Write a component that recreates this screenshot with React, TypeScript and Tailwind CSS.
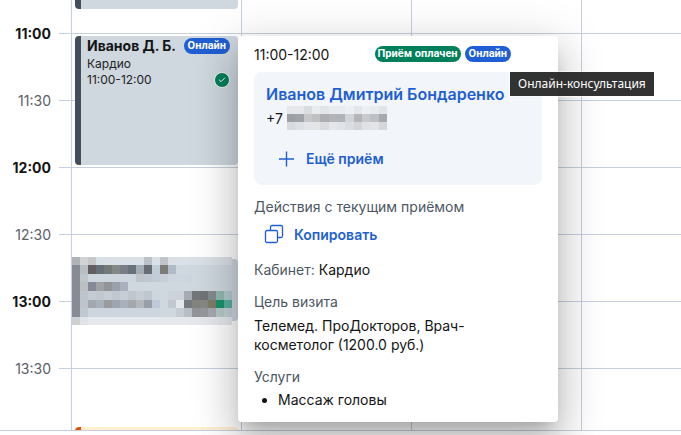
import { Check } from 'lucide-react';

type Slot = { time: string; full: boolean };

const SLOTS: Slot[] = [
  { time: '11:00', full: true },
  { time: '11:30', full: false },
  { time: '12:00', full: true },
  { time: '12:30', full: false },
  { time: '13:00', full: true },
  { time: '13:30', full: false },
];

const COLUMNS = [0, 1, 2, 3];

// each row: y, height, colours of the 8px cells from left to right
const CARD_MOSAIC: [number, number, string[]][] = [
  [0, 8, ['#b0b3b6', '#d1d3d5', '#c5c7ca', '#d8e0e7', '#dbe0e6', '#dbe0e6', '#dbe0e6', '#dbe0e6', '#dbe0e6', '#bcc1c7', '#dbe0e6', '#c1c5c9', '#dbe0e6', '#dbe0e6', '#dbe0e6', '#dbe0e6', '#dbe0e6', '#dbe0e6', '#dbe0e6', '#dbe0e6']],
  [8, 9, ['#868b94', '#b9bec2', '#625e60', '#686e76', '#737879', '#838786', '#787d87', '#69717a', '#a3abb5', '#686c74', '#c0ccd8', '#7d7b78', '#b0bbc7', '#cfd7df', '#cfd7df', '#cfd7df', '#cfd7df', '#cfd7df', '#cfd7df', '#cfd7df']],
  [17, 8, ['#868b94', '#bec5cb', '#cdd6de', '#cdd6de', '#cdd6de', '#cdd6de', '#cdd6de', '#cdd6de', '#bfc5c9', '#c0c7ce', '#c0cbd8', '#c7ced5', '#cdd6de', '#cdd6de', '#cdd6de', '#cfd7df', '#cfd7df', '#cfd7df', '#cfd7df', '#cfd7df']],
  [25, 9, ['#868b94', '#bcc0c3', '#868995', '#9fa3a4', '#929497', '#9ba1ab', '#abb0be', '#cfd7df', '#cfd7df', '#cfd7df', '#cfd7df', '#cfd7df', '#cfd7df', '#cfd7df', '#cfd7df', '#cfd7df', '#cfd7df', '#cfd7df', '#cfd7df', '#cfd7df']],
  [34, 9, ['#868b94', '#bdc4cb', '#c4cbd2', '#c1c8cf', '#c6cdd4', '#c0c7cf', '#c6cdd4', '#bfc6ce', '#c6cdd4', '#bec6ce', '#cdd6de', '#cfd7df', '#cdd3da', '#cdd1d8', '#a5abb2', '#73777a', '#707477', '#858a8c', '#91b9af', '#b0cbcb']],
  [43, 8, ['#868b94', '#bdc4cb', '#a4a8ae', '#a9b1bb', '#9a9b9d', '#9ea5b2', '#abb1ba', '#a3a7ae', '#b4b8bc', '#989fa7', '#becada', '#cfd7df', '#c3c7ce', '#e4e7eb', '#757a7c', '#838382', '#888885', '#827c6a', '#1a926c', '#5ab09c']],
  [51, 9, ['#868b94', '#c0c8d0', '#cdd6de', '#cdd6de', '#cdd6de', '#cdd6de', '#cdd6de', '#cdd6de', '#cdd6de', '#cdd6de', '#cdd6de', '#cfd7df', '#cfd7df', '#c6ccd3', '#b8bec5', '#92949a', '#96989e', '#a5a8b1', '#b5cac8', '#c3d0d5']],
  [60, 8, ['#cecfd3', '#e0e3e8', '#e5e8ed', '#e5e8ed', '#e5e8ed', '#e5e8ed', '#e5e8ed', '#e5e8ed', '#e5e8ed', '#e5e8ed', '#e5e8ed', '#e5e8ed', '#e5e8ed', '#e5e8ed', '#e5e8ed', '#e5e8ed', '#e5e8ed', '#e5e8ed', '#e5e8ed', '#e5e8ed']],
];

const PHONE_MOSAIC: [number, number, string[]][] = [
  [0, 8, ['#e5e7ea', '#e5e7ea', '#dadde0', '#e9ebee', '#e2e5e8', '#e9ecef', '#e9ecef', '#eceff3', '#e3e6ea', '#eceff3', '#e9ecef', '#e2e5e8']],
  [8, 8, ['#9c9fa6', '#9fa2a7', '#c7c8ca', '#c0c1c2', '#adaeb1', '#b3b4b6', '#b2b4bb', '#d2d4d7', '#b3b5b8', '#c8cacd', '#bdc0c5', '#a8a9ac']],
  [16, 8, ['#d7dade', '#dee0e4', '#e3e5e9', '#e5e5e6', '#d9dbdf', '#e4e6e9', '#e0e3e7', '#dbdee1', '#d3d5d7', '#dfe1e5', '#e2e4e8', '#d5d7da']],
];

function Mosaic({ rows, className }: { rows: [number, number, string[]][]; className: string }) {
  const last = rows[rows.length - 1];
  const width = last[2].length * 8;

  return (
    <svg
      className={className}
      viewBox={`0 0 ${width} ${last[0] + last[1]}`}
      preserveAspectRatio="none"
      shapeRendering="crispEdges"
      aria-hidden="true"
    >
      {rows.map(([y, h, colors]) =>
        colors.map((color, i) => <rect key={`${y}-${i}`} x={i * 8} y={y} width={8} height={h} fill={color} />)
      )}
    </svg>
  );
}

function OnlineBadge() {
  return (
    <span className="h-4 shrink-0 rounded-full bg-[#1f5fd3] px-1 font-['Roboto','Liberation_Sans',sans-serif] text-[11px] leading-4 font-bold text-white">
      Онлайн
    </span>
  );
}

function TimeColumn() {
  return (
    <div>
      {SLOTS.map(({ time, full }) => (
        <div key={time} className="flex h-[67px] items-center justify-end gap-2">
          <time className={full ? 'font-bold text-[#141414]' : 'text-[#5a6068]'}>{time}</time>
          <span className="h-px w-3 bg-[#c5cfde]" />
        </div>
      ))}
    </div>
  );
}

function DayColumn({ children }: { children?: React.ReactNode }) {
  return (
    <div className="relative border-l border-[#c5cfde]">
      <div className="pt-[33px]">
        {SLOTS.map(({ time }) => (
          <div key={time} className="h-[67px] border-t border-[#c5cfde] last:h-[62px]" />
        ))}
      </div>
      {children}
    </div>
  );
}

function Appointments() {
  return (
    <div className="absolute inset-0 flex flex-col overflow-hidden pr-[3px] pl-[3px]">
      <div className="h-[9px] shrink-0 rounded-b border-l-6 border-[#424e5b] bg-[#cfd7df]" />
      <article className="mt-[27px] h-[129px] shrink-0 rounded border-l-6 border-[#424e5b] bg-[#cfd7df] pr-2 pl-1.5 text-xs leading-4 text-[#222]">
        <div className="flex h-5 items-center justify-between">
          <h3 className="text-sm font-bold whitespace-nowrap text-[#141414]">Иванов Д. Б.</h3>
          <OnlineBadge />
        </div>
        <p>Кардио</p>
        <div className="flex items-center justify-between">
          <time>11:00-12:00</time>
          <span className="flex size-4 items-center justify-center rounded-full border border-[#f0f5f5] bg-[#00805a] text-white">
            <Check className="size-2" strokeWidth={3} />
          </span>
        </div>
      </article>
      <div className="mt-[92px] -ml-[3px] h-[68px] shrink-0">
        <div className="relative flex items-start">
          <div className="absolute top-0.5 right-0 h-[62px] w-5 rounded bg-[#cfd7df]" />
          <Mosaic rows={CARD_MOSAIC} className="relative h-[68px] w-40" />
        </div>
      </div>
      <div className="mt-[102px] h-5 shrink-0 rounded border-l-6 border-[#e1500a] bg-[#ffefd2]" />
    </div>
  );
}

function CopyIcon() {
  return (
    <svg className="size-5" viewBox="0 0 20 20" fill="none" stroke="currentColor" strokeWidth="1.3" aria-hidden="true">
      <rect x="1.5" y="6.5" width="12" height="12" rx="1.5" />
      <path d="M6.5 6.5V3A1.5 1.5 0 0 1 8 1.5h9A1.5 1.5 0 0 1 18.5 3v9a1.5 1.5 0 0 1-1.5 1.5h-3.5" />
    </svg>
  );
}

function PlusIcon() {
  return (
    <svg className="size-4" viewBox="0 0 16 16" fill="none" stroke="currentColor" strokeWidth="1.4" aria-hidden="true">
      <path d="M8.500 .5v15M1 8h15" />
    </svg>
  );
}

function AppointmentPopover() {
  return (
    <section className="absolute top-9 left-[238px] w-80 rounded bg-white px-4 pt-2 pb-[13px] text-sm leading-[19px] text-[#141414] shadow-[0_11px_15px_-7px_rgba(0,0,0,0.2),0_24px_38px_3px_rgba(0,0,0,0.14),0_9px_46px_8px_rgba(0,0,0,0.12)]">
      <header className="flex h-5 items-center justify-between pr-[31px]">
        <time>11:00-12:00</time>
        <div className="flex gap-1">
          <span className="h-4 rounded-full bg-[#00805a] px-[3px] font-['Roboto','Liberation_Sans',sans-serif] text-[11px] leading-4 font-bold text-white">
            Приём оплачен
          </span>
          <OnlineBadge />
        </div>
      </header>

      <div className="mt-2 h-[113px] rounded-lg bg-[#f2f6fb] px-3 pt-3">
        <a href="#patient" className="block text-base leading-5 font-semibold text-[#1f5fd3]">
          Иванов Дмитрий Бондаренко
        </a>
        <div className="flex items-center gap-1 pt-0.5">
          <span>+7</span>
          <Mosaic rows={PHONE_MOSAIC} className="h-6 w-[100px]" />
        </div>
        <button type="button" className="mt-[19px] flex items-center gap-3 pl-3 font-semibold text-[#1f5fd3]">
          <PlusIcon />
          Ещё приём
        </button>
      </div>

      <p className="mt-3 text-[#4d5763]">Действия с текущим приёмом</p>
      <button type="button" className="mt-2 flex items-center gap-2.5 pl-2.5 font-semibold text-[#1f5fd3]">
        <CopyIcon />
        Копировать
      </button>

      <p className="mt-4">
        <span className="text-[#4d5763]">Кабинет:</span> Кардио
      </p>
      <h4 className="mt-[13px] text-[#4d5763]">Цель визита</h4>
      <p className="mt-[5px] w-60">Телемед. ПроДокторов, Врач-косметолог (1200.0 руб.)</p>
      <h4 className="mt-[13px] text-[#4d5763]">Услуги</h4>
      <ul className="mt-1 list-disc pl-6">
        <li>Массаж головы</li>
      </ul>
    </section>
  );
}

export default function App() {
  return (
    <main className="relative overflow-hidden bg-white pb-1 font-['Inter','Liberation_Sans',sans-serif] text-sm">
      <div className="grid grid-cols-[71px_170px_170px_170px_1fr] border-b border-[#c5cfde]">
        <TimeColumn />
        {COLUMNS.map((col) => (
          <DayColumn key={col}>{col === 0 && <Appointments />}</DayColumn>
        ))}
      </div>
      <AppointmentPopover />
      <div
        role="tooltip"
        className="absolute top-[72px] left-[510px] bg-[#222]/93 px-2 font-['Noto_Sans',sans-serif] text-xs leading-6 whitespace-nowrap text-white outline outline-white/60"
      >
        Онлайн-консультация
      </div>
    </main>
  );
}
